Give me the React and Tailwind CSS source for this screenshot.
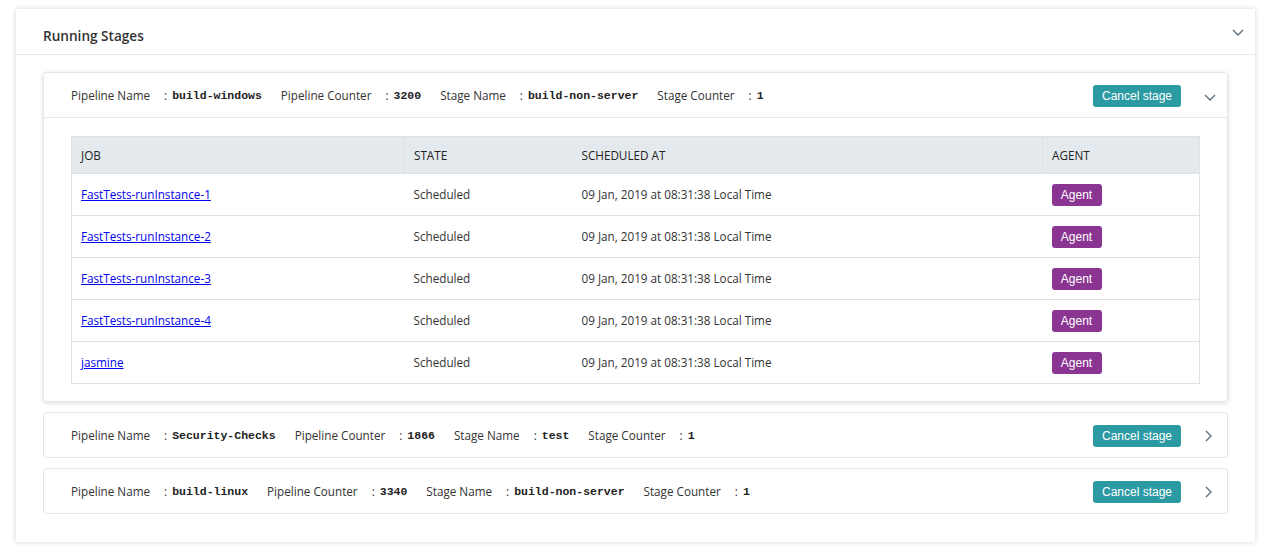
const stages = [
  { name: 'build-windows', counter: '3200', stage: 'build-non-server', stageCounter: '1', open: true },
  { name: 'Security-Checks', counter: '1866', stage: 'test', stageCounter: '1', open: false },
  { name: 'build-linux', counter: '3340', stage: 'build-non-server', stageCounter: '1', open: false },
]

const jobs = [
  'FastTests-runInstance-1',
  'FastTests-runInstance-2',
  'FastTests-runInstance-3',
  'FastTests-runInstance-4',
  'jasmine',
]

function ChevronDown({ className }) {
  return (
    <svg width="12" height="7" viewBox="0 0 12 7" className={className}>
      <polyline points="1,1 6,6 11,1" fill="none" stroke="#5b6b78" strokeWidth="1.3" />
    </svg>
  )
}

function ChevronRight() {
  return (
    <svg width="7" height="12" viewBox="0 0 7 12">
      <polyline points="1,1 6,6 1,11" fill="none" stroke="#5b6b78" strokeWidth="1.3" />
    </svg>
  )
}

function Field({ label, value, first }) {
  return (
    <div className={first ? 'flex items-center' : 'ml-[19px] flex items-center'}>
      <span className="text-[11.7px] text-[#333]">{label}</span>
      <span className="ml-[14px] text-[11.7px] text-[#333]">:</span>
      <span className="ml-[5px] font-['Liberation_Mono',monospace] text-[11.5px] font-bold text-[#222]">
        {value}
      </span>
    </div>
  )
}

function StageHeader({ s }) {
  return (
    <div className="flex h-[44px] items-center pt-[2px] pl-[27px] pr-[4px]">
      <div className="flex flex-1 items-center">
        <Field first label="Pipeline Name" value={s.name} />
        <Field label="Pipeline Counter" value={s.counter} />
        <Field label="Stage Name" value={s.stage} />
        <Field label="Stage Counter" value={s.stageCounter} />
      </div>
      <button className="h-[22px] w-[88px] rounded-[3px] bg-[#2c9aa3] font-['Liberation_Sans',sans-serif] text-[12px] text-white">
        Cancel stage
      </button>
      <span className="ml-[12px] flex w-[30px] justify-center">
        {s.open ? <ChevronDown className="mt-[3px] ml-[3px]" /> : <ChevronRight />}
      </span>
    </div>
  )
}

function JobsTable() {
  return (
    <table className="w-[1129px] border-collapse text-left text-[11.7px] text-[#333]">
      <thead>
        <tr className="h-[37px] bg-[#e3e9ec]">
          <th className="w-[333px] border border-[#dde2e5] pt-[1px] pl-[9px] font-normal text-[#222]">JOB</th>
          <th className="w-[168px] border-y border-[#dde2e5] pt-[1px] pl-[9px] font-normal text-[#222]">STATE</th>
          <th className="w-[470px] border-y border-[#dde2e5] pt-[1px] pl-[9px] font-normal text-[#222]">SCHEDULED AT</th>
          <th className="border border-[#dde2e5] pt-[1px] pl-[9px] font-normal text-[#222]">AGENT</th>
        </tr>
      </thead>
      <tbody>
        {jobs.map((job) => (
          <tr key={job} className="h-[42px] border border-[#dde2e5]">
            <td className="pt-[1px] pl-[9px]">
              <a href="#" className="text-[#0000ee] underline">{job}</a>
            </td>
            <td className="pt-[1px] pl-[9px]">Scheduled</td>
            <td className="pt-[1px] pl-[9px]">09 Jan, 2019 at 08:31:38 Local Time</td>
            <td className="pt-[1px] pl-[9px]">
              <span className="inline-flex h-[22px] w-[50px] items-center justify-center rounded-[3px] bg-[#8a3592] font-['Liberation_Sans',sans-serif] text-[12px] text-white">
                Agent
              </span>
            </td>
          </tr>
        ))}
      </tbody>
    </table>
  )
}

export default function App() {
  return (
    <div className="min-h-[548px] bg-white pt-[9px] pl-4 font-['Open_Sans',sans-serif]">
      <div className="w-[1239px] bg-white shadow-[0_0_5px_rgba(0,0,0,0.18)]">
        <div className="flex items-start justify-between border-b border-[#e6eaed] pt-[17px] pr-[11px] pb-[8px] pl-[27px]">
          <h2 className="text-[13.6px] leading-[20px] font-semibold text-[#333]">Running Stages</h2>
          <ChevronDown className="mt-[3px]" />
        </div>
        <div className="space-y-[10px] px-[27px] pt-[17px] pb-[28px]">
          {stages.map((s) =>
            s.open ? (
              <div key={s.name} className="rounded-[3px] border border-[#e6e6e6] shadow-[0_1px_5px_rgba(0,0,0,0.14)]">
                <div className="border-b border-[#e6eaed]">
                  <StageHeader s={s} />
                </div>
                <div className="px-[27px] pt-[18px] pb-[17px]">
                  <JobsTable />
                </div>
              </div>
            ) : (
              <div key={s.name} className="rounded-[3px] border border-[#e3e6e8]">
                <StageHeader s={s} />
              </div>
            )
          )}
        </div>
      </div>
    </div>
  )
}
